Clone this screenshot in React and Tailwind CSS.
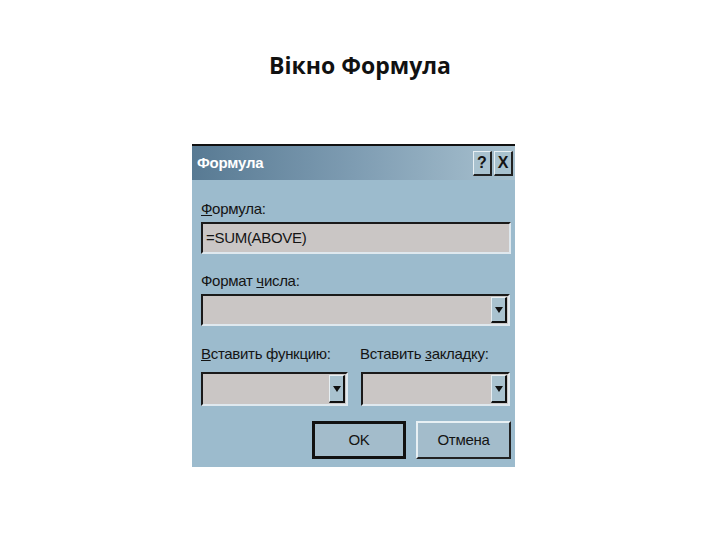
import React from "react";

const sans = "font-['Liberation_Sans',Arial,sans-serif]";

function Sunken({ className = "", children }) {
  return (
    <div
      className={`border-t-[2px] border-l-[2px] border-t-[#1a1a1a] border-l-[#1a1a1a] border-b-[2px] border-r-[2px] border-b-[#dfe8ee] border-r-[#dfe8ee] bg-[#cac6c5] ${className}`}
    >
      {children}
    </div>
  );
}

function DropButton() {
  return (
    <div className="flex h-full w-[16px] items-center justify-center border-t border-l border-t-[#e6eef2] border-l-[#e6eef2] border-b-[2px] border-r-[2px] border-b-[#111] border-r-[#111] bg-[#a9c2cf]">
      <svg width="8" height="6" viewBox="0 0 8 6">
        <path d="M0 0H8L4 6Z" fill="#111" />
      </svg>
    </div>
  );
}

function Select({ className = "" }) {
  return (
    <Sunken className={`flex justify-end p-[1px] ${className}`}>
      <DropButton />
    </Sunken>
  );
}

export default function App() {
  return (
    <div className="w-[720px] h-[540px] bg-white">
      <div className="pt-[50px] text-center">
        <h1 className="font-['Open_Sans','Lato',sans-serif] text-[23px] font-bold leading-[31px] text-[#111]">
          Вікно Формула
        </h1>
      </div>

      <div className={`mt-[63px] ml-[192px] w-[323px] h-[323px] border-t-[2px] border-t-[#111] bg-[#9cbbcd] ${sans} text-[#141414]`}>
        {/* caption bar */}
        <div className="flex h-[34px] items-center justify-between bg-gradient-to-r from-[#587a93] via-[#7e9cb2] to-[#a8c1cf] pl-[5px] pr-[2px]">
          <span className="text-[15px] font-bold text-white tracking-[-0.2px]">Формула</span>
          <div className="flex gap-[2px]">
            <div className="flex h-[25px] w-[19px] items-center justify-center border-t border-l border-t-[#e8f0f4] border-l-[#e8f0f4] border-b-[2px] border-r-[2px] border-b-[#222] border-r-[#222] bg-[#a9c2cf] text-[16px] font-bold leading-none">
              ?
            </div>
            <div className="flex h-[25px] w-[19px] items-center justify-center border-t border-l border-t-[#e8f0f4] border-l-[#e8f0f4] border-b-[2px] border-r-[2px] border-b-[#222] border-r-[#222] bg-[#a9c2cf] text-[16px] font-bold leading-none">
              X
            </div>
          </div>
        </div>

        <div className="pl-[9px] pr-[4px] text-[15px] leading-[18px] tracking-[-0.3px]">
          <div className="mt-[20px]">
            <u>Ф</u>ормула:
          </div>
          <Sunken className="mt-[4px] flex h-[32px] w-[310px] items-center pl-[3px]">
            =SUM(ABOVE)
          </Sunken>

          <div className="mt-[18px]">
            Формат <u>ч</u>исла:
          </div>
          <Select className="mt-[4px] h-[32px] w-[309px]" />

          <div className="mt-[19px] flex">
            <div className="w-[159px]">
              <u>В</u>ставить функцию:
            </div>
            <div>
              Вставить <u>з</u>акладку:
            </div>
          </div>
          <div className="mt-[9px] flex gap-[13px]">
            <Select className="h-[34px] w-[147px]" />
            <Select className="h-[34px] w-[149px]" />
          </div>

          <div className="mt-[15px] flex justify-end gap-[10px]">
            <div className="flex h-[38px] w-[94px] items-center justify-center border-[3px] border-[#111] bg-[#a3bccb]">
              OK
            </div>
            <div className="flex h-[38px] w-[95px] items-center justify-center border-t-[2px] border-l-[2px] border-t-[#e8f0f4] border-l-[#e8f0f4] border-b-[2px] border-r-[2px] border-b-[#222] border-r-[#222] bg-[#a3bccb]">
              Отмена
            </div>
          </div>
        </div>
      </div>
    </div>
  );
}
